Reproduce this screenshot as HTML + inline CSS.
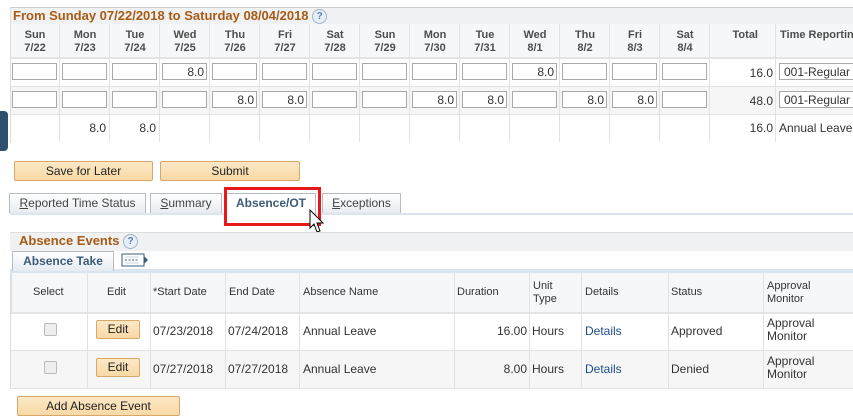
<!DOCTYPE html>
<html><head><style>
body{margin:0;width:853px;height:403px;overflow:hidden;background:#fff;font-family:"Liberation Sans",Arial,sans-serif;font-size:12px;color:#333;position:relative}
.a{position:absolute}
.hd{color:#4d4d4d;font-weight:bold;text-align:center;font-size:11px;line-height:13px}
.inp{position:absolute;height:17px;border:1px solid #a9a9a9;background:#fff;box-sizing:border-box;text-align:right;font-size:12px;line-height:16px;padding-right:2px;color:#333}
.btn{position:absolute;background:linear-gradient(#fce8c6,#f8d9a6);border:1px solid #d8a869;border-radius:2px;text-align:center;font-size:12px;line-height:18px;color:#222;box-sizing:border-box}
.tab{position:absolute;top:193px;height:20px;background:linear-gradient(#fff,#e8ecf0);border:1px solid #b5bcc4;border-bottom:none;box-sizing:border-box;text-align:center;line-height:19px;color:#444}
.vl{position:absolute;width:1px;background:#e2e2e2}
.th{position:absolute;font-size:11px;color:#333;line-height:13px}
.td{position:absolute;font-size:12px;color:#333}
.q{display:inline-block;width:13px;height:13px;border:1px solid #9fb3c8;border-radius:50%;background:#e6eef6;color:#5a7fa8;font-size:10px;line-height:13px;text-align:center;font-weight:bold;vertical-align:middle}
</style></head><body>
<div class="a" style="left:10px;top:7px;width:843px;height:135px;border-top:1px solid #ccc;border-left:1px solid #ddd"></div>
<div class="a" style="left:11px;top:8px;width:842px;height:16px;background:#eff1f2"></div>
<div class="a" style="left:13px;top:8px;font-size:13px;font-weight:bold;color:#a85b14;line-height:16px">From Sunday 07/22/2018 to Saturday 08/04/2018 <span class="q">?</span></div>
<div class="a" style="left:11px;top:24px;width:842px;height:33px;background:#f6f7f8"></div>
<div class="a" style="left:11px;top:57px;width:842px;height:2px;background:#e4e4e4"></div>
<div class="a" style="left:11px;top:86px;width:842px;height:1px;background:#e4e4e4"></div>
<div class="a" style="left:11px;top:87px;width:842px;height:27px;background:#f6f6f6"></div>
<div class="a" style="left:11px;top:114px;width:842px;height:1px;background:#e4e4e4"></div>
<div id="grid"></div>
<div class="a" style="left:0;top:111px;width:8px;height:40px;background:#2e4f6e;border-radius:0 4px 4px 0"></div>
<script>
var d=[["Sun","7/22"],["Mon","7/23"],["Tue","7/24"],["Wed","7/25"],["Thu","7/26"],["Fri","7/27"],["Sat","7/28"],["Sun","7/29"],["Mon","7/30"],["Tue","7/31"],["Wed","8/1"],["Thu","8/2"],["Fri","8/3"],["Sat","8/4"]];
var r1={3:1,10:1},r2={4:1,5:1,8:1,9:1,11:1,12:1},h="";
for(var i=0;i<14;i++){var x=10+i*50;
h+='<div class="hd a" style="left:'+x+'px;top:29px;width:50px">'+d[i][0]+'<br>'+d[i][1]+'</div>';
h+='<div class="vl" style="left:'+(x+49)+'px;top:24px;height:118px"></div>';
h+='<div class="inp" style="left:'+(x+2)+'px;top:63px;width:45px">'+(r1[i]?'8.0':'')+'</div>';
h+='<div class="inp" style="left:'+(x+2)+'px;top:91px;width:45px">'+(r2[i]?'8.0':'')+'</div>';}
h+='<div class="td" style="left:60px;top:121px;width:46px;text-align:right">8.0</div><div class="td" style="left:110px;top:121px;width:46px;text-align:right">8.0</div>';
h+='<div class="vl" style="left:775px;top:24px;height:118px"></div>';
h+='<div class="hd a" style="left:710px;top:29px;width:66px;text-align:right;padding-right:0"><span style="margin-right:18px">Total</span></div>';
h+='<div class="hd a" style="left:780px;top:29px;white-space:nowrap">Time Reporting</div>';
h+='<div class="td" style="left:713px;width:60px;text-align:right;top:66px">16.0</div><div class="td" style="left:713px;width:60px;text-align:right;top:94px">48.0</div><div class="td" style="left:713px;width:60px;text-align:right;top:121px">16.0</div>';
h+='<div class="inp" style="left:779px;top:63px;width:80px;text-align:left;padding-left:4px">001-Regular</div>';
h+='<div class="inp" style="left:779px;top:91px;width:80px;text-align:left;padding-left:4px">001-Regular</div>';
h+='<div class="td" style="left:779px;top:121px;white-space:nowrap">Annual Leave</div>';
document.getElementById('grid').innerHTML=h;
</script>
<div class="btn" style="left:14px;top:161px;width:139px;height:20px">Save for Later</div>
<div class="btn" style="left:160px;top:161px;width:140px;height:20px">Submit</div>
<div class="a" style="left:10px;top:213px;width:843px;height:2px;background:#dbe5ef"></div>
<div class="tab" style="left:9px;width:137px"><u>R</u>eported Time Status</div>
<div class="tab" style="left:150px;width:72px"><u>S</u>ummary</div>
<div class="tab" style="left:226px;width:90px;height:22px;background:#fff;font-weight:bold;color:#3d5b7c">Absence/OT</div>
<div class="tab" style="left:322px;width:79px"><u>E</u>xceptions</div>
<div class="a" style="left:224px;top:187px;width:91px;height:33px;border:3px solid #e8171a"></div>
<svg class="a" style="left:309px;top:209px" width="18" height="26" viewBox="0 0 18 26"><path d="M1 1 L1 19 L5 15 L8 23 L11 22 L8 14 L14 14 Z" fill="#fff" stroke="#000" stroke-width="1"/></svg>
<div class="a" style="left:10px;top:232px;width:843px;height:18px;background:#eff1f2;border-top:1px solid #ddd"></div>
<div class="a" style="left:19px;top:233px;font-size:13px;font-weight:bold;color:#a85b14;line-height:16px">Absence Events <span class="q">?</span></div>
<div class="a" style="left:10px;top:269px;width:843px;height:4px;background:#dbe5ef"></div>
<div class="a" style="left:12px;top:251px;width:102px;height:20px;background:linear-gradient(#fff,#e6ecf2);border:1px solid #b5bcc4;border-bottom:none;box-sizing:border-box;text-align:center;font-weight:bold;color:#3d5b7c;line-height:19px">Absence Take</div>
<svg class="a" style="left:121px;top:253px" width="28" height="14" viewBox="0 0 28 14"><rect x="1" y="1" width="22" height="12" fill="#fff" stroke="#3d5b7c"/><path d="M4 7h13" stroke="#3d5b7c" stroke-dasharray="2 1.5"/><path d="M4 4h14M4 10h14" stroke="#9ab" stroke-width=".6"/><path d="M23 3l4 4-4 4z" fill="#3d5b7c"/></svg>
<div class="a" style="left:11px;top:273px;width:842px;height:39px;background:#f6f7f8;border-left:1px solid #ddd"></div>
<div class="a" style="left:11px;top:312px;width:842px;height:2px;background:#e4e4e4"></div>
<div class="a" style="left:11px;top:350px;width:842px;height:1px;background:#e4e4e4"></div>
<div class="a" style="left:11px;top:351px;width:842px;height:37px;background:#f6f6f6"></div>
<div class="a" style="left:11px;top:388px;width:842px;height:1px;background:#e4e4e4"></div>
<div class="a" style="left:10px;top:273px;width:1px;height:116px;background:#ddd"></div>
<div id="t2"></div>
<script>
var c=[87,150,225,299,454,529,581,668,763],h='';
c.forEach(function(x){h+='<div class="vl" style="left:'+x+'px;top:273px;height:116px"></div>'});
var H=[[33,"Select",286],[107,"Edit",286],[153,"*Start Date",286],[229,"End Date",286],[303,"Absence Name",286],[457,"Duration",286],[533,"Unit<br>Type",280],[585,"Details",286],[671,"Status",286],[767,"Approval<br>Monitor",280]];
H.forEach(function(a){h+='<div class="th" style="left:'+a[0]+'px;top:'+a[2]+'px">'+a[1]+'</div>'});
[[324,"07/23/2018","07/24/2018","16.00","Approved",317],[362,"07/27/2018","07/27/2018","8.00","Denied",355]].forEach(function(r){var y=r[0];
h+='<div class="a" style="left:44px;top:'+(y-1)+'px;width:11px;height:11px;border:1px solid #bbb;border-radius:2px;background:#eee"></div>';
h+='<div class="btn" style="left:96px;top:'+(y-4)+'px;width:44px;height:19px;line-height:17px">Edit</div>';
h+='<div class="td" style="left:153px;top:'+y+'px">'+r[1]+'</div><div class="td" style="left:228px;top:'+y+'px">'+r[2]+'</div>';
h+='<div class="td" style="left:303px;top:'+y+'px">Annual Leave</div>';
h+='<div class="td" style="left:454px;top:'+y+'px;width:73px;text-align:right">'+r[3]+'</div>';
h+='<div class="td" style="left:532px;top:'+y+'px">Hours</div><div class="td" style="left:585px;top:'+y+'px;color:#1f4e8c">Details</div>';
h+='<div class="td" style="left:671px;top:'+y+'px">'+r[4]+'</div><div class="td" style="left:767px;top:'+r[5]+'px;line-height:13px">Approval<br>Monitor</div>';});
document.getElementById('t2').innerHTML=h;
</script>
<div class="btn" style="left:17px;top:396px;width:163px;height:20px">Add Absence Event</div>
</body></html>
